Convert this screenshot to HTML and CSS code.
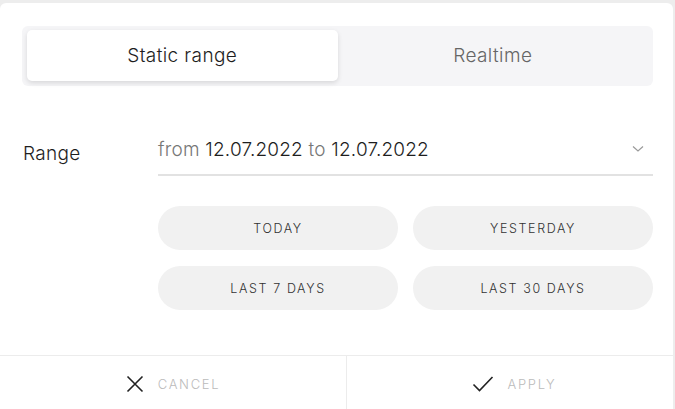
FILE: index.html
```html
<!DOCTYPE html>
<html lang="en">

<head>
  <meta charset="UTF-8">
  <title>Date range</title>
  <link rel="stylesheet" href="styles.css">
</head>

<body>
  <div class="dialog">

    <div class="tabs">
      <div class="tab active">Static range</div>
      <div class="tab">Realtime</div>
    </div>

    <div class="field">
      <label class="fieldLabel">Range</label>
      <div class="fieldBody">
        <div class="select">
          <span class="value"><span class="muted">from</span> 12.07.2022 <span class="muted">to</span> 12.07.2022</span>
          <svg class="chevron" width="12" height="8" viewBox="0 0 12 8">
            <path d="M1 1.5l5 4.5 5-4.5" fill="none" stroke="#9a9a9a" stroke-width="1.2"/>
          </svg>
        </div>

        <div class="presets">
          <button class="preset">TODAY</button>
          <button class="preset">YESTERDAY</button>
          <button class="preset">LAST 7 DAYS</button>
          <button class="preset">LAST 30 DAYS</button>
        </div>
      </div>
    </div>

    <div class="footer">
      <button class="action">
        <svg width="18" height="18" viewBox="0 0 18 18">
          <path d="M1.5 1.5l15 15M16.5 1.5l-15 15" stroke="#222" stroke-width="1.6"/>
        </svg>
        CANCEL
      </button>
      <button class="action apply">
        <svg width="22" height="18" viewBox="0 0 22 18">
          <path d="M1.5 9.5l6 6L20.5 2" fill="none" stroke="#222" stroke-width="1.6"/>
        </svg>
        APPLY
      </button>
    </div>

  </div>
</body>

</html>
```

FILE: styles.css
```css
body {
  margin: 0;
  background: #ededed;
  font-family: Inter, "Noto Sans", sans-serif;
}

.dialog {
  margin-top: 3px;
  margin-right: 2px;
  height: 406px;
  background: #fff;
  border-radius: 6px 6px 0 0;
  display: flex;
  flex-direction: column;
}

/* segmented switch */
.tabs {
  margin: 23px 20px 0 22px;
  padding: 4px 5px;
  height: 52px;
  background: #f5f5f7;
  border-radius: 6px;
  display: grid;
  grid-template-columns: 1fr 1fr;
}

.tab {
  display: flex;
  align-items: center;
  justify-content: center;
  font-size: 19px;
  letter-spacing: 0.4px;
  font-weight: 350;
  color: #666;
  border-radius: 5px;
  height: 51px;
}

.tab.active {
  background: #fff;
  color: #1e1e1e;
  box-shadow: 0 2px 5px rgba(0, 0, 0, 0.12);
}

/* range row */
.field {
  display: flex;
  margin: 38px 20px 0 23px;
}

.fieldLabel {
  width: 135px;
  font-size: 19px;
  font-weight: 350;
  letter-spacing: 0.3px;
  color: #1e1e1e;
  padding-top: 18px;
}

.fieldBody {
  flex: 1;
}

.select {
  display: flex;
  align-items: center;
  justify-content: space-between;
  height: 50px;
  border-bottom: 2px solid #e2e2e2;
}

.value {
  font-size: 19px;
  font-weight: 350;
  letter-spacing: 0.2px;
  color: #1e1e1e;
}

.muted {
  color: #777;
}

.chevron {
  margin-right: 9px;
}

.presets {
  display: grid;
  grid-template-columns: 1fr 1fr;
  gap: 16px 15px;
  margin-top: 30px;
}

.preset {
  height: 44px;
  border: none;
  border-radius: 22px;
  background: #f1f1f1;
  font-family: inherit;
  font-size: 12.5px;
  font-weight: 350;
  letter-spacing: 1.6px;
  color: #333;
}

/* bottom actions */
.footer {
  margin-top: auto;
  height: 53px;
  border-top: 1px solid #ececec;
  display: grid;
  grid-template-columns: 346px 1fr;
}

.action {
  display: flex;
  align-items: center;
  justify-content: center;
  gap: 14px;
  border: none;
  background: #fff;
  font-family: inherit;
  font-size: 13px;
  font-weight: 350;
  letter-spacing: 1.7px;
  color: #bbb;
  padding: 3px 0 0 0;
}

.action.apply {
  padding-left: 8px;
}

.action + .action {
  border-left: 1px solid #ececec;
}
```
